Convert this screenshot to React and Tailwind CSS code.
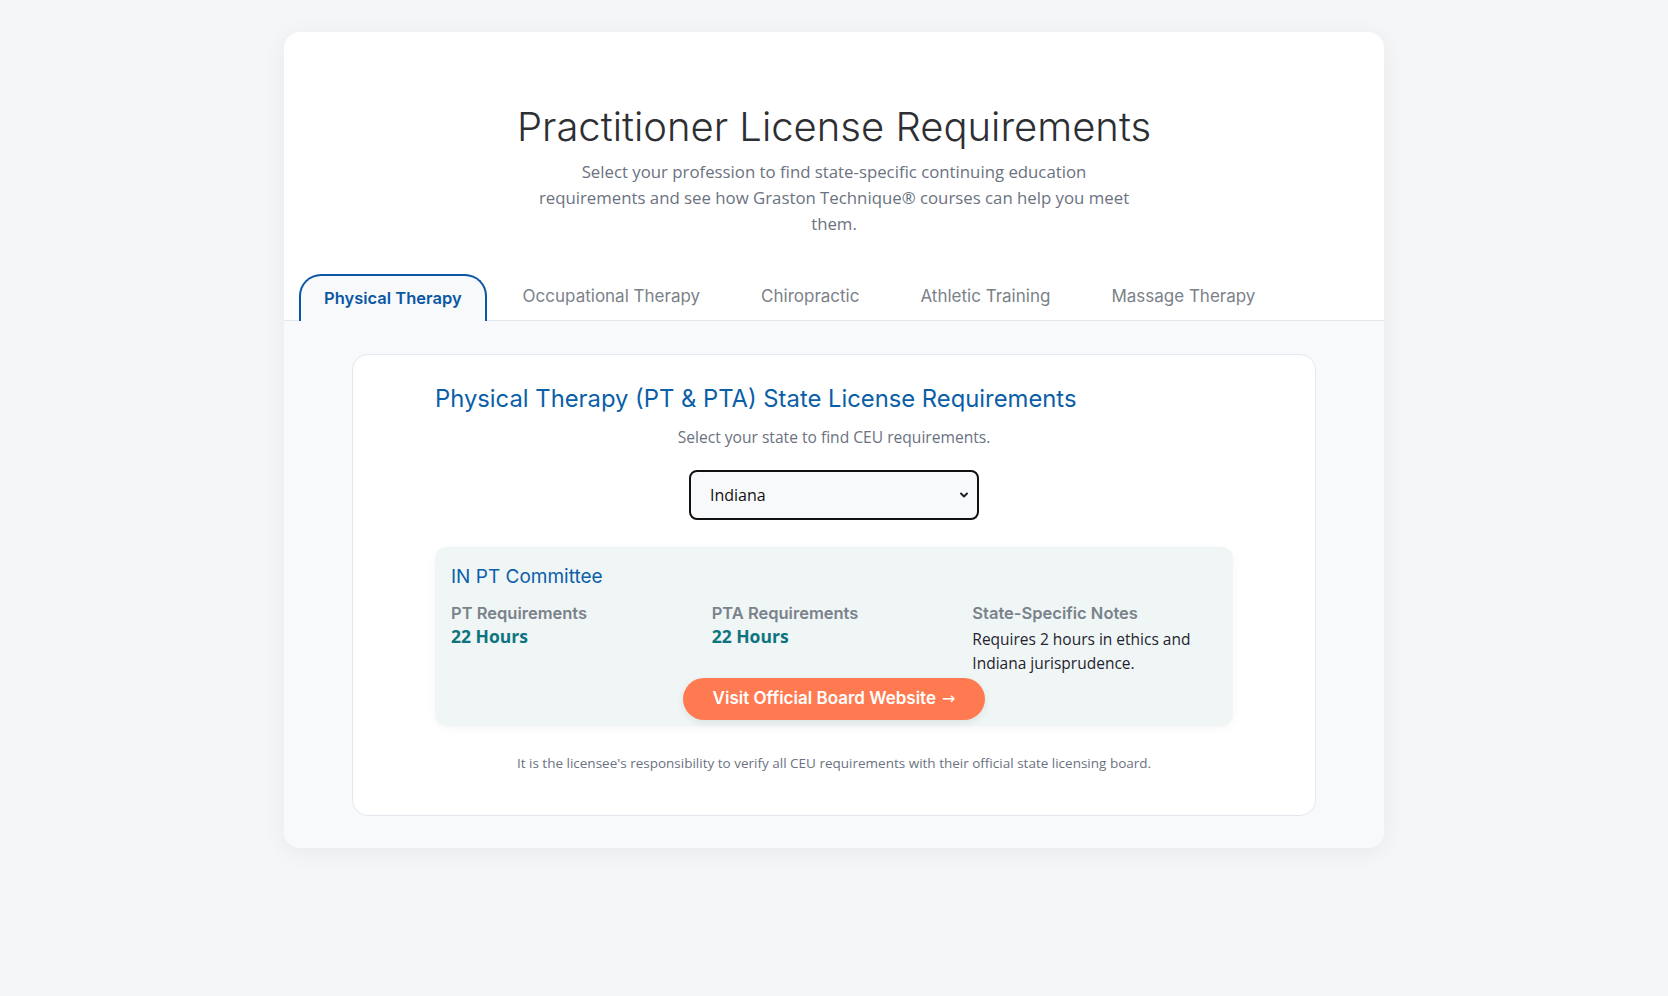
import React, { useState } from 'react'

const tabs = [
  'Physical Therapy',
  'Occupational Therapy',
  'Chiropractic',
  'Athletic Training',
  'Massage Therapy',
]

function Stat({ label, children }) {
  return (
    <div>
      <div className="font-['Inter','Noto_Sans',sans-serif] text-[16.5px] font-semibold leading-[22px] text-[#7a828b]">
        {label}
      </div>
      {children}
    </div>
  )
}

function App() {
  const [active, setActive] = useState(0)

  return (
    <div className="min-h-screen bg-[#f5f6f8] pt-8 pb-12 font-['Open_Sans','Noto_Sans',sans-serif]">
      <div className="mx-auto w-[1100px] overflow-hidden rounded-2xl bg-white shadow-[0_4px_24px_rgba(15,23,42,0.06)]">
        {/* Header */}
        <header className="px-8 pt-[71px] pb-[37px] text-center">
          <h1 className="font-['Inter','Noto_Sans',sans-serif] text-[40px] font-light leading-[48px] text-[#2d2f33]">
            Practitioner License Requirements
          </h1>
          <p className="mx-auto mt-2 max-w-[600px] text-[16.8px] leading-[26px] text-[#6b7280]">
            Select your profession to find state-specific continuing education requirements and see how
            Graston Technique® courses can help you meet them.
          </p>
        </header>

        {/* Tabs */}
        <nav className="flex items-end gap-[11px] border-b border-[#e3e8ee] px-[15px]">
          {tabs.map((t, i) => (
            <button
              key={t}
              onClick={() => setActive(i)}
              className={
                i === active
                  ? "-mb-px h-[47px] rounded-t-[22px] border-2 border-b-0 border-[#0b57a4] bg-[#f7f9fb] px-[23px] font-['Inter','Noto_Sans',sans-serif] text-[16.5px] font-semibold text-[#0b57a4]"
                  : "h-[46px] border-2 border-transparent px-[23px] font-['Inter','Noto_Sans',sans-serif] text-[17px] font-normal text-[#7b8189]"
              }
            >
              {t}
            </button>
          ))}
        </nav>

        {/* Content */}
        <section className="bg-[#f7f9fb] px-[68px] pt-[33px] pb-8">
          <div className="rounded-2xl border border-[#e3e8ee] bg-white pt-7 pb-[42px]">
            <div className="mx-auto max-w-[798px]">
              <h2 className="font-['Inter','Noto_Sans',sans-serif] text-[23.8px] font-normal leading-8 text-[#0b5fa8]">
                Physical Therapy (PT &amp; PTA) State License Requirements
              </h2>
              <p className="mt-[10px] text-center text-[15.6px] leading-6 text-[#6b7280]">
                Select your state to find CEU requirements.
              </p>

              <div className="mt-[21px] flex justify-center">
                <div className="relative w-[290px]">
                  <select
                    defaultValue="Indiana"
                    className="h-[50px] w-full appearance-none rounded-lg border-2 border-[#111] bg-[#f8f9fb] pl-[19px] pr-10 text-[16px] text-[#111] outline-none"
                  >
                    <option>Illinois</option>
                    <option>Indiana</option>
                    <option>Iowa</option>
                  </select>
                  <svg
                    className="pointer-events-none absolute right-[10px] top-1/2 h-[10px] w-[10px] -translate-y-1/2"
                    viewBox="0 0 10 10"
                    fill="none"
                    stroke="#222"
                    strokeWidth="2"
                    strokeLinecap="round"
                    strokeLinejoin="round"
                  >
                    <path d="M2 3.5 5 6.5 8 3.5" />
                  </svg>
                </div>
              </div>

              {/* Board info */}
              <div className="mt-[27px] rounded-xl bg-[#f0f5f5] px-4 pt-[18px] pb-[6px] shadow-[0_2px_10px_rgba(15,23,42,0.04)]">
                <h3 className="font-['Inter','Noto_Sans',sans-serif] text-[19px] font-normal leading-6 text-[#0b5fa8]">
                  IN PT Committee
                </h3>
                <div className="mt-[13px] grid grid-cols-3 gap-4">
                  <Stat label="PT Requirements">
                    <div className="text-[17.5px] font-bold leading-6 text-[#0e7480]">22 Hours</div>
                  </Stat>
                  <Stat label="PTA Requirements">
                    <div className="text-[17.5px] font-bold leading-6 text-[#0e7480]">22 Hours</div>
                  </Stat>
                  <Stat label="State-Specific Notes">
                    <p className="mt-[3px] text-[15.5px] leading-6 text-[#1f2430]">
                      Requires 2 hours in ethics and Indiana jurisprudence.
                    </p>
                  </Stat>
                </div>
                <div className="mt-[3px] flex justify-center">
                  <a
                    href="#"
                    className="flex h-[42px] w-[302px] items-center justify-center gap-1.5 rounded-full bg-[#ff7a50] font-['Inter','Noto_Sans',sans-serif] text-[17px] font-semibold text-white shadow-[0_3px_8px_rgba(0,0,0,0.08)]"
                  >
                    Visit Official Board Website
                    <span className="font-['DejaVu_Sans',sans-serif] text-[16px] font-normal">→</span>
                  </a>
                </div>
              </div>

              <p className="mt-[27px] text-center text-[13.5px] leading-5 text-[#6b7280]">
                It is the licensee's responsibility to verify all CEU requirements with their official state
                licensing board.
              </p>
            </div>
          </div>
        </section>
      </div>
    </div>
  )
}

export default App
